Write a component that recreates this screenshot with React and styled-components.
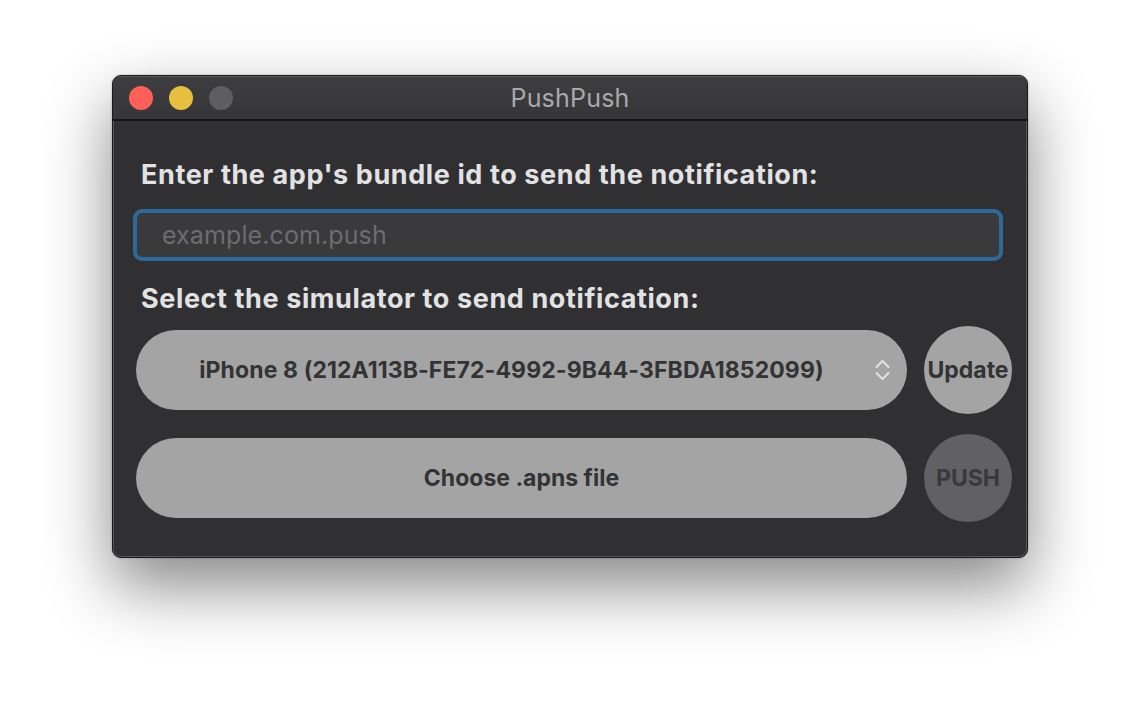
import React from 'react'
import styled, { createGlobalStyle } from 'styled-components'

const Global = createGlobalStyle`
  html, body {
    margin: 0;
    background: #ffffff;
  }
  body {
    font-family: Inter, "Liberation Sans", sans-serif;
    -webkit-font-smoothing: antialiased;
  }
`

const Stage = styled.div`
  width: 1140px;
  height: 706px;
  display: flex;
  justify-content: center;
  align-items: flex-start;
  padding-top: 75px;
  box-sizing: border-box;
  overflow: hidden;
`

const Window = styled.div`
  width: 916px;
  height: 483px;
  box-sizing: border-box;
  border-radius: 9px;
  border: 1px solid #1a1a1c;
  box-shadow: inset 0 0 0 1px #58585b, 0 28px 66px rgba(0, 0, 0, 0.48), 0 0 2px rgba(0, 0, 0, 0.3);
  background: #303033;
  display: flex;
  flex-direction: column;
  overflow: hidden;
`

const TitleBar = styled.div`
  height: 43px;
  flex: none;
  display: grid;
  grid-template-columns: 1fr auto 1fr;
  align-items: center;
  padding: 0 16px;
  background: linear-gradient(#3e3e41, #363639);
  border-bottom: 2px solid #151517;
  box-shadow: inset 0 1px 0 #58585b;
`

const Lights = styled.div`
  display: flex;
  gap: 16px;
`

const Light = styled.span`
  width: 24px;
  height: 24px;
  border-radius: 50%;
  background: ${p => p.$color};
`

const Title = styled.div`
  color: #a9a9ab;
  font-size: 25px;
  letter-spacing: 0.2px;
`

const Content = styled.div`
  flex: 1;
  display: flex;
  flex-direction: column;
  padding: 38px 15px 0 20px;
`

const Label = styled.div`
  color: #e2e2e3;
  font-size: 27px;
  line-height: 32px;
  font-weight: 700;
  letter-spacing: 0.6px;
  padding-left: 8px;
  margin-bottom: ${p => p.$gap}px;
`

const InputWrap = styled.div`
  height: 52px;
  box-sizing: border-box;
  border: 4px solid #2c6a9b;
  border-radius: 9px;
  background: #3a3a3d;
  display: flex;
  align-items: center;
  padding-left: 23px;
  margin: 0 9px 22px 0;
`

const Input = styled.input`
  flex: 1;
  border: none;
  background: transparent;
  outline: none;
  font-family: inherit;
  font-size: 25px;
  letter-spacing: 0.1px;
  color: #e2e2e3;
  &::placeholder {
    color: #6d6d70;
  }
`

const Row = styled.div`
  display: flex;
  align-items: center;
  gap: 17px;
  padding-left: 3px;
  margin-bottom: ${p => p.$gap}px;
`

const Pill = styled.div`
  position: relative;
  width: 771px;
  height: 80px;
  flex: none;
  box-sizing: border-box;
  padding-right: ${p => (p.$select ? 20 : 0)}px;
  border-radius: 40px;
  background: #a4a4a4;
  color: #333335;
  font-size: 23px;
  font-weight: 700;
  letter-spacing: ${p => (p.$select ? 0.1 : 0)}px;
  display: flex;
  align-items: center;
  justify-content: center;
`

const Stepper = styled.svg`
  position: absolute;
  right: 17px;
  top: 29px;
`

const Round = styled.div`
  width: 88px;
  height: 88px;
  flex: none;
  border-radius: 50%;
  background: ${p => (p.$dim ? '#616163' : '#a4a4a4')};
  color: ${p => (p.$dim ? '#39393b' : '#333335')};
  font-size: 23px;
  font-weight: 700;
  display: flex;
  align-items: center;
  justify-content: center;
`

export default function App() {
  return (
    <Stage>
      <Global />
      <Window>
        <TitleBar>
          <Lights>
            <Light $color="#fe5f57" />
            <Light $color="#e6bf3e" />
            <Light $color="#5e5e61" />
          </Lights>
          <Title>PushPush</Title>
          <span />
        </TitleBar>
        <Content>
          <Label $gap={18}>Enter the app's bundle id to send the notification:</Label>
          <InputWrap>
            <Input placeholder="example.com.push" />
          </InputWrap>
          <Label $gap={11}>Select the simulator to send notification:</Label>
          <Row $gap={20}>
            <Pill $select>
              iPhone 8 (212A113B-FE72-4992-9B44-3FBDA1852099)
              <Stepper width="15" height="22" viewBox="0 0 15 22">
                <path d="M1.5 8 L7.5 2 L13.5 8 M1.5 14 L7.5 20 L13.5 14" fill="none" stroke="#e2e2e2" strokeWidth="2" strokeLinecap="round" strokeLinejoin="round" />
              </Stepper>
            </Pill>
            <Round>Update</Round>
          </Row>
          <Row $gap={0}>
            <Pill>Choose .apns file</Pill>
            <Round $dim>PUSH</Round>
          </Row>
        </Content>
      </Window>
    </Stage>
  )
}
